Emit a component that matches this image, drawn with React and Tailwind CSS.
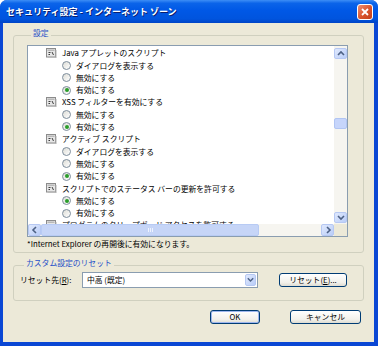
import React from "react";

const rows = [
  { cat: true, label: "Java アプレットのスクリプト" },
  { label: "ダイアログを表示する" },
  { label: "無効にする" },
  { label: "有効にする", on: true },
  { cat: true, label: "XSS フィルターを有効にする" },
  { label: "無効にする" },
  { label: "有効にする", on: true },
  { cat: true, label: "アクティブ スクリプト" },
  { label: "ダイアログを表示する" },
  { label: "無効にする" },
  { label: "有効にする", on: true },
  { cat: true, label: "スクリプトでのステータス バーの更新を許可する" },
  { label: "無効にする", on: true },
  { label: "有効にする" },
  { cat: true, label: "プログラムのクリップボード アクセスを許可する" },
];

const ScriptIcon = () => (
  <svg width="11" height="10" viewBox="0 0 11 10" className="ml-[18px] shrink-0">
    <rect x="0.5" y="0.5" width="9" height="8.5" fill="#e6e6e6" stroke="#8c8c8c" />
    <rect x="1.5" y="1.5" width="7" height="1.5" fill="#b8b8b8" />
    <path d="M2.5 4.5h2M2.5 6.5h1.5M6 4l1.5 3" stroke="#3d3d3d" strokeWidth="1" fill="none" />
    <path d="M10 2v8H2" stroke="#b0b0b0" strokeWidth="1" fill="none" />
  </svg>
);

const Radio = ({ on }) => (
  <span className="ml-[34px] flex h-[9px] w-[9px] shrink-0 items-center justify-center rounded-full border border-[#7d8d9c] bg-[linear-gradient(135deg,#dcdcd6,#ffffff)]">
    {on && <span className="h-[4px] w-[4px] rounded-full bg-[#2a9d2a]" />}
  </span>
);

const Chevron = ({ dir }) => {
  const d = {
    up: "M2 6l3-3 3 3",
    down: "M2 3l3 3 3-3",
    left: "M6 2L3 5l3 3",
    right: "M4 2l3 3-3 3",
  }[dir];
  return (
    <svg width="10" height="10" viewBox="0 0 10 10">
      <path d={d} stroke="#4d6185" strokeWidth="1.6" fill="none" />
    </svg>
  );
};

const ArrowBox = ({ dir, className }) => (
  <div
    className={
      "flex items-center justify-center rounded-[2px] border border-[#b6c8f3] bg-[linear-gradient(135deg,#e0e9fd,#b9cdf8)] " +
      className
    }
  >
    <Chevron dir={dir} />
  </div>
);

const XpButton = ({ children, className }) => (
  <button
    className={
      "flex items-center justify-center rounded-[3px] border border-[#003c74] bg-[linear-gradient(to_bottom,#ffffff,#f2f1eb_70%,#dedcd2)] text-[7.8px] leading-none " +
      className
    }
  >
    {children}
  </button>
);

export default function App() {
  return (
    <div className="flex h-[346px] w-[378px] flex-col overflow-hidden rounded-t-[7px] bg-[#0a47d4] font-['Noto_Sans_CJK_JP',sans-serif] text-[7.8px] leading-none text-black">
      {/* title bar */}
      <div className="flex h-[23px] shrink-0 items-center justify-between bg-[linear-gradient(to_bottom,#3d8ef6_0%,#0b64e9_14%,#0058e6_45%,#0054de_82%,#0044c6_100%)] pl-[6px] pr-[5px]">
        <span className="text-[9px] font-bold text-white [text-shadow:1px_1px_0_#0a1e6e]">
          セキュリティ設定 - インターネット ゾーン
        </span>
        <div className="flex h-[16px] w-[16px] items-center justify-center rounded-[3px] border border-white bg-[linear-gradient(135deg,#ee8e72,#d9532c_55%,#c0401c)]">
          <svg width="10" height="10" viewBox="0 0 10 10">
            <path d="M2 2l6 6M8 2L2 8" stroke="#fff" strokeWidth="1.8" />
          </svg>
        </div>
      </div>

      {/* client area */}
      <div className="mb-[4px] ml-[3px] mr-[4px] flex flex-1 flex-col bg-[#ece9d8]">
        <fieldset className="mx-[10px] mt-[5px] rounded-[3px] border border-[#d0d0bf] pb-[3px] pl-[13px] pr-[15px] pt-[3px]">
          <legend className="ml-[4px] px-[2px] pb-[4px] leading-[10px] text-[#1f4fc8]">設定</legend>
          {/* list box */}
          <div className="flex h-[192px] flex-col border border-[#8a9db0] bg-white">
            <div className="flex h-[178px]">
              <div className="flex-1 overflow-hidden pt-[1px]">
                {rows.map((r, i) =>
                  r.cat ? (
                    <div key={i} className="flex h-[12.3px] shrink-0 items-center whitespace-nowrap">
                      <ScriptIcon />
                      <span className="ml-[5px]">{r.label}</span>
                    </div>
                  ) : (
                    <div key={i} className="flex h-[12.3px] shrink-0 items-center whitespace-nowrap">
                      <Radio on={r.on} />
                      <span className="ml-[5px]">{r.label}</span>
                    </div>
                  )
                )}
              </div>
              {/* vertical scrollbar */}
              <div className="flex w-[13px] flex-col bg-[#f6f5f0]">
                <ArrowBox dir="up" className="mt-[2px] h-[11px]" />
                <div className="h-[59px]" />
                <div className="h-[11px] rounded-[2px] border border-[#b1c5f3] bg-[#c6d5fb]" />
                <div className="flex-1" />
                <ArrowBox dir="down" className="mb-[1px] h-[11px]" />
              </div>
            </div>
            {/* horizontal scrollbar */}
            <div className="flex h-[12px] bg-[#f6f5f0]">
              <ArrowBox dir="left" className="w-[13px]" />
              <div className="flex w-[218px] items-center justify-center gap-[1px] rounded-[2px] border border-[#b8cbf4] bg-[#c6d5f7]">
                <span className="h-[4px] w-px bg-[#eef3fe]" />
                <span className="h-[4px] w-px bg-[#eef3fe]" />
                <span className="h-[4px] w-px bg-[#eef3fe]" />
              </div>
              <div className="flex-1" />
              <ArrowBox dir="right" className="w-[13px]" />
              <div className="w-[13px] bg-[#ece9d8]" />
            </div>
          </div>
          <p className="mt-[2px] leading-[10px]">*Internet Explorer の再開後に有効になります。</p>
        </fieldset>

        <fieldset className="mx-[10px] mt-[5px] rounded-[3px] border border-[#d0d0bf] pb-[12px] pl-[6px] pr-[15px]">
          <legend className="ml-[4px] px-[2px] pb-[4px] leading-[10px] text-[#1f4fc8]">カスタム設定のリセット</legend>
          <div className="flex items-center">
            <span className="w-[62px]">
              リセット先(<span className="underline">R</span>):
            </span>
            <div className="flex h-[16px] w-[176px] items-center border border-[#8a9db0] bg-white pl-[4px] pr-[1px]">
              <span className="flex-1">中高 (既定)</span>
              <ArrowBox dir="down" className="h-[12px] w-[11px]" />
            </div>
            <XpButton className="ml-[21px] h-[14px] w-[68px]">
              リセット(<span className="underline">E</span>)...
            </XpButton>
          </div>
        </fieldset>

        <div className="mt-[9px] flex justify-end gap-[30px] pr-[13px]">
          <XpButton className="h-[14px] w-[50px] shadow-[inset_0_0_0_1px_#9fb7ee]">OK</XpButton>
          <XpButton className="h-[14px] w-[71px]">キャンセル</XpButton>
        </div>
      </div>
    </div>
  );
}
